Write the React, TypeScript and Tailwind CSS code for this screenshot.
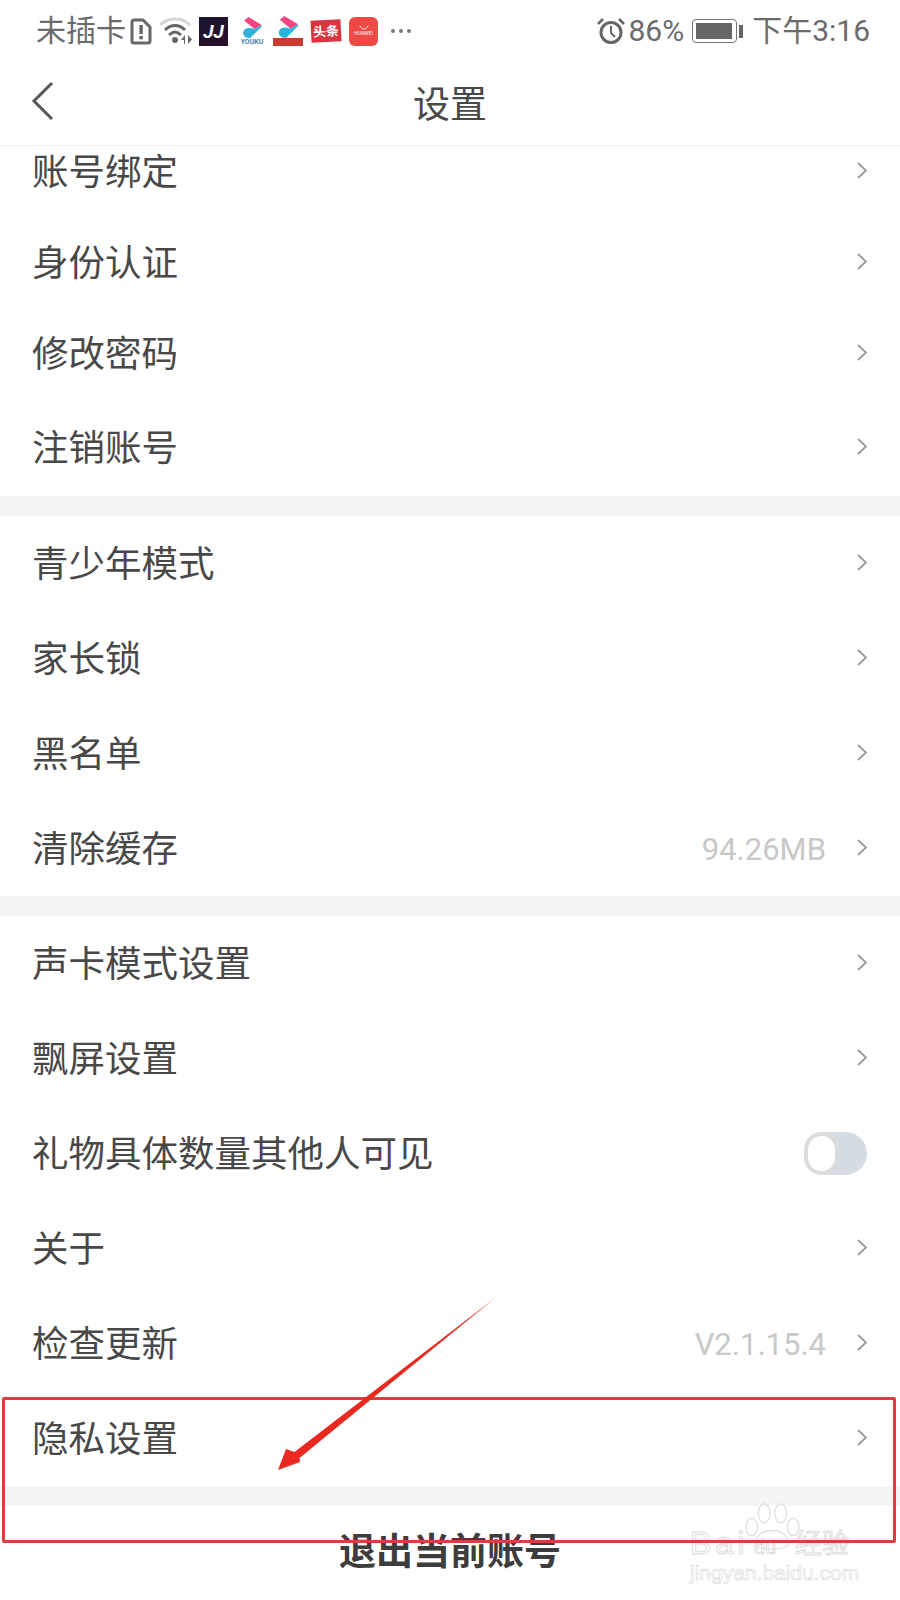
const cjk = { fontFamily: 'Roboto, "Noto Sans CJK SC", sans-serif' };
const mark = { fontFamily: '"Liberation Sans", "Noto Sans CJK SC", sans-serif' };

type Row = { label: string; height: string; value?: string; toggle?: boolean };

const groups: Row[][] = [
  [
    { label: '账号绑定', height: 'h-[91px]' },
    { label: '身份认证', height: 'h-[91px]' },
    { label: '修改密码', height: 'h-[91px]' },
    { label: '注销账号', height: 'h-[97px]' },
  ],
  [
    { label: '青少年模式', height: 'h-[95px]' },
    { label: '家长锁', height: 'h-[95px]' },
    { label: '黑名单', height: 'h-[95px]' },
    { label: '清除缓存', height: 'h-[95px]', value: '94.26MB' },
  ],
  [
    { label: '声卡模式设置', height: 'h-[95px]' },
    { label: '飘屏设置', height: 'h-[95px]' },
    { label: '礼物具体数量其他人可见', height: 'h-[95px]', toggle: true },
    { label: '关于', height: 'h-[95px]' },
    { label: '检查更新', height: 'h-[95px]', value: 'V2.1.15.4' },
    { label: '隐私设置', height: 'h-[95px]' },
  ],
];

function YoukuMark({ className }: { className?: string }) {
  return (
    <svg viewBox="0 0 24 24" className={className}>
      <path d="M3 4 L8 0 L23 9 L15 14 Z" fill="#f0457f" />
      <path d="M15 14 L23 9 L23 11 L10 24 C3 24 0 19 3 15 C5 12 10 12 15 14 Z" fill="#2fb3dd" />
    </svg>
  );
}

function StatusBar() {
  return (
    <div className="h-[62px] flex items-center pl-[36px] pr-[30px] text-[#6b6b6b] text-[30px]" style={cjk}>
      <span className="w-[92px] leading-none">未插卡</span>
      {/* sim */}
      <svg viewBox="0 0 22 27" className="w-[22px] h-[27px] ml-[2px]">
        <path d="M2 4 a2 2 0 0 1 2-2 h9 l7 7 v14 a2 2 0 0 1-2 2 H4 a2 2 0 0 1-2-2 Z" fill="none" stroke="#666" strokeWidth="3" />
        <rect x="9.4" y="7" width="3.4" height="9" fill="#666" />
        <rect x="9.4" y="18" width="3.4" height="3.4" fill="#666" />
      </svg>
      {/* wifi */}
      <svg viewBox="0 0 34 28" className="w-[34px] h-[28px] ml-[7px]">
        <path d="M1 8 C9 0 23 0 31 8" fill="none" stroke="#d6d6d6" strokeWidth="3" />
        <path d="M6 13 C12 7 20 7 26 13" fill="none" stroke="#666" strokeWidth="3" />
        <path d="M10 18 C14 14 18 14 22 18" fill="none" stroke="#666" strokeWidth="3" />
        <circle cx="16" cy="23" r="3" fill="#666" />
        <path d="M26 18 v9 h-1 v-4 h-3 Z M29 18 l4 4.5 l-4 4.5 Z" fill="#666" />
      </svg>
      {/* app notifications */}
      <div className="w-[29px] h-[29px] ml-[6px] bg-gradient-to-br from-[#15152f] to-[#2c0f2c] flex items-center justify-center text-white text-[19px] leading-none font-bold italic">
        JJ
      </div>
      <div className="w-[26px] h-[29px] ml-[11px] flex flex-col items-center">
        <YoukuMark className="w-[22px] h-[21px]" />
        <span className="text-[7px] leading-[8px] text-[#4d7bb0] font-bold">YOUKU</span>
      </div>
      <div className="w-[30px] h-[30px] ml-[8px] flex flex-col items-center">
        <YoukuMark className="w-[22px] h-[22px]" />
        <div className="w-[30px] h-[8px] bg-[#c93a30]" />
      </div>
      <div className="w-[30px] h-[22px] ml-[8px] bg-[#d9343f] -rotate-3 flex items-center justify-center text-white text-[13px] leading-none font-bold">
        头条
      </div>
      <div className="w-[29px] h-[29px] ml-[8px] rounded-[6px] bg-[#ee4a45] flex flex-col items-center justify-center text-white">
        <svg viewBox="0 0 12 6" className="w-[10px] h-[5px]">
          <path d="M1 1 C3 6 9 6 11 1" fill="none" stroke="#fff" strokeWidth="1" />
        </svg>
        <span className="text-[5px] leading-[7px]">HUAWEI</span>
      </div>
      <div className="ml-[13px] flex gap-[4px]">
        <div className="w-[4px] h-[4px] rounded-full bg-[#777]" />
        <div className="w-[4px] h-[4px] rounded-full bg-[#777]" />
        <div className="w-[4px] h-[4px] rounded-full bg-[#777]" />
      </div>

      <div className="ml-auto flex items-center">
        <svg viewBox="0 0 28 28" className="w-[28px] h-[28px]">
          <circle cx="14" cy="15.5" r="10" fill="none" stroke="#666" strokeWidth="3" />
          <path d="M14 9 V16 L18 20" fill="none" stroke="#666" strokeWidth="2" />
          <path d="M1 7 L6 2 M22 2 L27 7" stroke="#666" strokeWidth="2.6" />
        </svg>
        <span className="ml-[3px] leading-none">86%</span>
        <div className="ml-[8px] w-[45px] h-[24px] rounded-[4px] border border-[#777] p-[3px]">
          <div className="w-[36px] h-full bg-[#666]" />
        </div>
        <div className="ml-[2px] w-[4px] h-[13px] bg-[#666]" />
        <span className="ml-[9px] leading-none">下午3:16</span>
      </div>
    </div>
  );
}

function SettingsRow({ row }: { row: Row }) {
  return (
    <div className={`${row.height} flex items-center pl-[32px] pr-[33px] bg-white`}>
      <span className="mt-[4px] text-[36.5px] leading-none text-[#484848]">{row.label}</span>
      {row.value && <span className="ml-auto mr-[31px] mt-[2px] text-[31px] leading-none text-[#c8c8c8]">{row.value}</span>}
      {row.toggle ? (
        <div className="ml-auto w-[63px] h-[43px] rounded-full bg-[#d5dce4]">
          <div className="w-[35px] h-[43px] rounded-full bg-white border-[4px] border-[#dcdcdc]" />
        </div>
      ) : (
        <svg viewBox="0 0 10 17" className={`${row.value ? '' : 'ml-auto'} w-[10px] h-[17px] -mt-[2px]`}>
          <path d="M1 1 L9 8.5 L1 16" fill="none" stroke="#999" strokeWidth="1.8" />
        </svg>
      )}
    </div>
  );
}

export default function App() {
  return (
    <div className="relative w-[900px] h-[1600px] bg-white overflow-hidden" style={cjk}>
      <header className="relative z-10 bg-white border-b border-[#eeeeee] h-[146px]">
        <StatusBar />
        <div className="h-[83px] flex items-center justify-center relative">
          <svg viewBox="0 0 24 40" className="absolute left-[31px] top-[19px] w-[24px] h-[40px]">
            <path d="M21 2 L3 20 L21 38" fill="none" stroke="#555" strokeWidth="3" />
          </svg>
          <h1 className="mt-[4px] text-[37px] leading-none text-[#484848] font-normal">设置</h1>
        </div>
      </header>

      <main className="-mt-[20px]">
        {groups.map((rows, i) => (
          <section key={i} className="border-b-[20px] border-[#f5f5f5]">
            {rows.map((row) => (
              <SettingsRow key={row.label} row={row} />
            ))}
          </section>
        ))}
        <button className="w-full h-[93px] text-[37px] leading-none font-bold text-[#3d3d3d]">退出当前账号</button>
      </main>

      {/* baidu watermark */}
      <div className="absolute left-[688px] top-[1502px] w-[170px] h-[80px]" style={mark}>
        <svg viewBox="0 0 60 50" className="absolute left-[54px] top-0 w-[58px] h-[50px]">
          <g fill="#ffffff" fillOpacity="0.5" stroke="#dcdcdc" strokeWidth="1.2">
            <ellipse cx="23" cy="11" rx="6" ry="10" />
            <ellipse cx="40" cy="11" rx="6" ry="10" />
            <ellipse cx="10" cy="25" rx="6" ry="9" />
            <ellipse cx="53" cy="25" rx="6" ry="9" />
            <path d="M14 42 C14 24 48 24 48 42 C48 50 14 50 14 42 Z" />
          </g>
        </svg>
        <span className="absolute left-[2px] top-[21px] text-[32px] leading-[40px] tracking-[4px] text-white/70 [-webkit-text-stroke:1px_#dcdcdc]">Bai</span>
        <span className="absolute left-[66px] top-[33px] text-[20px] leading-[24px] text-white/70 [-webkit-text-stroke:0.7px_#d4d4d4]">du</span>
        <span className="absolute left-[107px] top-[26px] text-[27px] leading-[32px] text-white/70 [-webkit-text-stroke:1px_#dcdcdc]">经验</span>
        <span className="absolute left-[2px] top-[59px] text-[21px] leading-[24px] text-white/70 [-webkit-text-stroke:0.7px_#dcdcdc]">jingyan.baidu.com</span>
      </div>

      {/* annotation: red box and arrow */}
      <div className="absolute left-[2px] top-[1397px] w-[894px] h-[146px] border-[3px] border-[#d8403f] rounded-[2px]" />
      <svg viewBox="0 0 900 1600" className="absolute inset-0 w-[900px] h-[1600px] pointer-events-none">
        <path d="M495 1298 L299.5 1458 L300 1462 L278 1470 L286 1449 L294.5 1452 Z" fill="#ea2a20" />
      </svg>
    </div>
  );
}
